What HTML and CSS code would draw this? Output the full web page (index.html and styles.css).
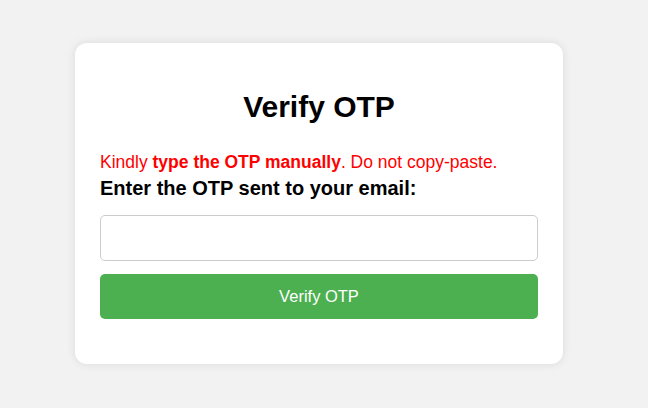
FILE: index.html
```html
<!DOCTYPE html>
<html>
<head>
<meta charset="utf-8">
<link rel="stylesheet" href="styles.css">
</head>
<body>
<div class="card">
  <h1 class="title">Verify OTP</h1>
  <p class="warning">Kindly <strong>type the OTP manually</strong>. Do not copy-paste.</p>
  <label class="label" for="otp">Enter the OTP sent to your email:</label>
  <input class="otp-input" id="otp" type="text">
  <button class="btn">Verify OTP</button>
</div>
</body>
</html>
```
FILE: styles.css
```css
html, body {
  margin: 0;
  padding: 0;
}
body {
  background: #f2f2f2;
  font-family: "Liberation Sans", Arial, sans-serif;
  height: 408px;
  display: flex;
  align-items: center;
  justify-content: center;
  padding-right: 10px;
  padding-bottom: 1px;
  box-sizing: border-box;
}
.card {
  background: #fff;
  width: 438px;
  padding: 25px 25px 45px;
  border-radius: 12px;
  box-shadow: 0 0 10px rgba(0,0,0,0.1);
  display: flex;
  flex-direction: column;
}
.title {
  text-align: center;
  font-size: 30px;
  margin: 20px 0 23px;
  line-height: 38px;
}
.warning {
  color: #ff0000;
  font-size: 17.5px;
  margin: 0 0 2px;
  line-height: 26px;
}
.label {
  font-weight: bold;
  font-size: 20px;
  line-height: 23px;
  margin-bottom: 15px;
}
.otp-input {
  box-sizing: border-box;
  width: 100%;
  height: 46px;
  border: 1px solid #ccc;
  border-radius: 5px;
  padding: 12px;
  font-size: 16px;
  margin: 0 0 13px;
}
.btn {
  height: 45px;
  border: none;
  border-radius: 5px;
  background: #4caf50;
  color: #fff;
  font-family: "Liberation Sans", Arial, sans-serif;
  font-size: 16.5px;
}
```
